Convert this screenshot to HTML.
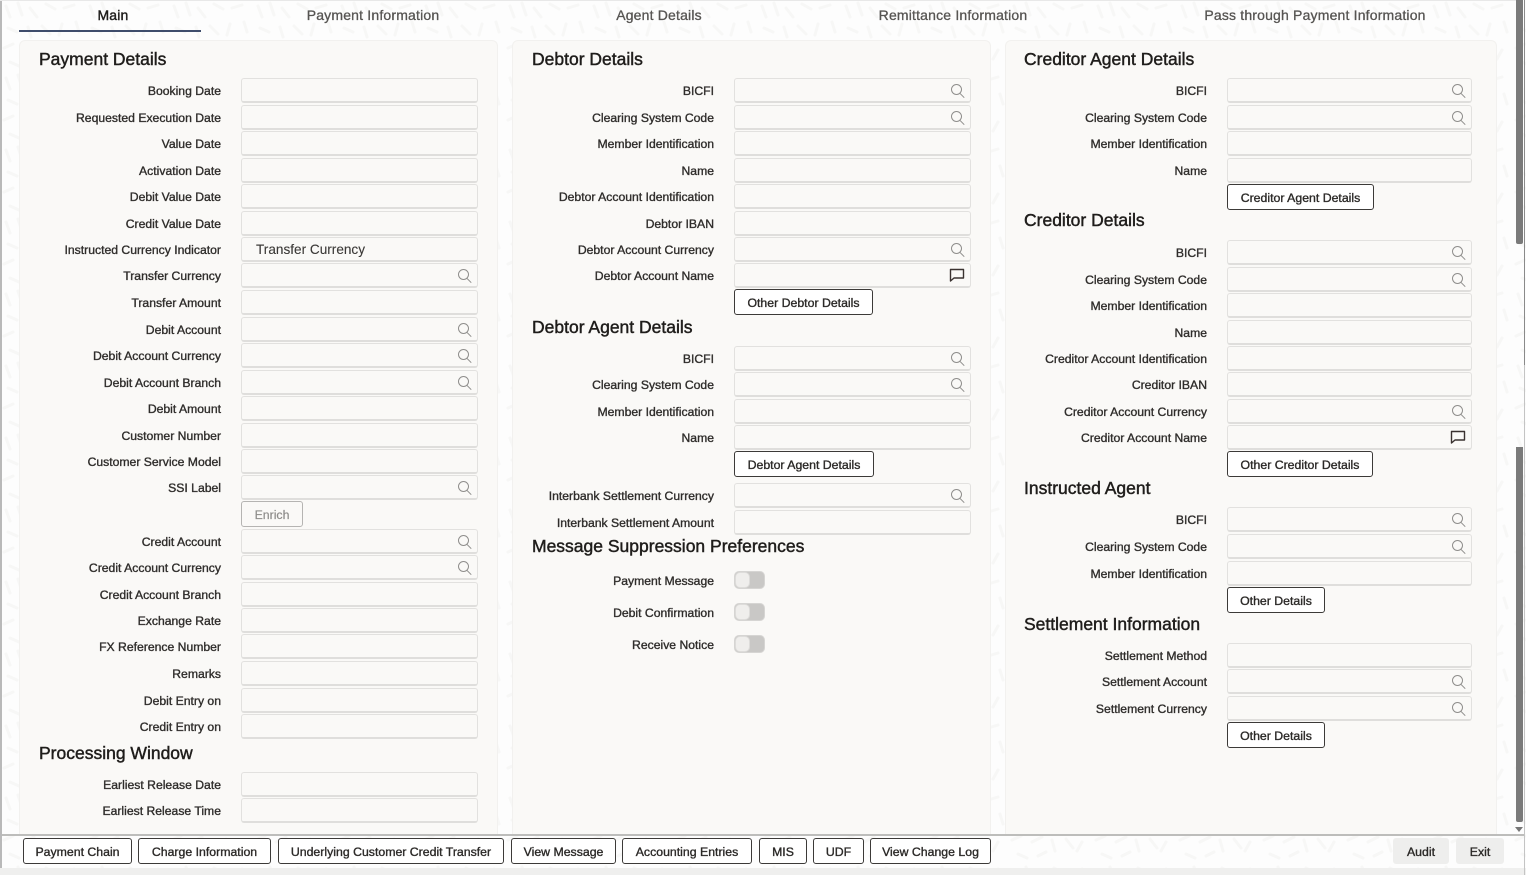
<!DOCTYPE html>
<html lang="en"><head><meta charset="utf-8"><title>Payment</title>
<style>
html,body{margin:0;padding:0;width:1526px;height:875px;overflow:hidden;background:#fdfdfd;font-family:"Liberation Sans",sans-serif;color:#2d2b29}
#bg{position:absolute;left:0;top:0}
.p{position:absolute;top:40px;height:794px;background:#faf9f7;border:1px solid #f2f1ef;border-bottom:0;border-radius:6px 6px 0 0;box-sizing:border-box}
.t{position:absolute;top:6px;height:18px;line-height:18px;font-size:14px;letter-spacing:.18px;color:#565452;transform:translateX(-50%);white-space:nowrap;-webkit-text-stroke:.3px #565452}
#u{position:absolute;left:19px;top:30px;width:182px;height:2px;background:#3f4d6c}
.c{position:absolute;top:0;width:500px;height:835px}
.h{position:absolute;left:39px;height:24px;line-height:24px;font-size:17.5px;color:#1f1d1b;white-space:nowrap;-webkit-text-stroke:.45px #1f1d1b}
.r{position:absolute;left:0;height:24px;width:480px;font-size:12.2px;line-height:26px}
.r span{position:absolute;right:259px;white-space:nowrap;color:#2f2d2b;-webkit-text-stroke:.35px #2f2d2b}
.r b{position:absolute;left:241px;top:0;width:237px;height:25px;box-sizing:border-box;background:#faf9f7;border:1px solid #e2e1df;border-bottom:2px solid #dfdedc;border-radius:3px;font-weight:400;font-size:13.6px;line-height:23px;padding-left:14px;color:#3a3836;-webkit-text-stroke:.1px #3a3836}
.w b{width:245px}
.s b::before{content:"";position:absolute;right:8px;top:5px;width:9px;height:9px;border:1.3px solid #8f8e8c;border-radius:50%}
.s b::after{content:"";position:absolute;right:5px;top:16px;width:6px;height:1.4px;background:#8f8e8c;transform:rotate(45deg)}
.m svg{position:absolute;right:5px;top:4px}
.o{position:absolute;height:26px;box-sizing:border-box;background:#fff;border:1px solid #3c3a38;border-radius:3px;font-size:12.3px;line-height:26px;text-align:center;white-space:nowrap;color:#2b2927;-webkit-text-stroke:.35px #2b2927}
.g{position:absolute;left:734px;width:31px;height:18px;box-sizing:border-box;background:#c9c8c6;border:1px solid #d6d5d3;border-radius:5px}
.g::after{content:"";position:absolute;left:0;top:0;width:15px;height:16px;background:#efeeec;border:1px solid #dddcda;border-radius:5px;box-sizing:border-box}
#sb1,#sb2{position:absolute;left:1516px;width:7px;background:#7a7a7a;border-radius:0 0 2px 2px}
</style></head>
<body>
<svg id="bg" width="1526" height="875" xmlns="http://www.w3.org/2000/svg"><defs><pattern id="d" width="84" height="72" patternUnits="userSpaceOnUse"><g stroke="#f7f7f6" stroke-width="3" stroke-linecap="round" fill="none"><path d="M6 6l4 11M18 3l4 12M30 8l7 9M46 4l9 5M64 8l10-3M8 28l9 4M28 27l3 10M42 26l8 8M62 24l-3 11M76 22l3 10M4 48l9-4M24 50l10-5M44 48l3 11M58 47l7 9M74 50l-5 9M10 62l9 4M30 64l8-4"/></g></pattern></defs><rect width="1526" height="875" fill="url(#d)"/></svg>

<div style="position:absolute;left:0;top:0;width:2px;height:875px;background:#b9b9b9"></div>
<div style="position:absolute;left:0;top:0;width:1516px;height:1px;background:#e8e8e8"></div>

<div class="t" style="left:113px;color:#1f1d1b;-webkit-text-stroke:.4px #1f1d1b">Main</div>
<div class="t" style="left:373px">Payment Information</div>
<div class="t" style="left:659px">Agent Details</div>
<div class="t" style="left:953px">Remittance Information</div>
<div class="t" style="left:1315px">Pass through Payment Information</div>
<div id="u"></div>

<div class="p" style="left:19px;width:479px"></div>
<div class="p" style="left:512px;width:479px"></div>
<div class="p" style="left:1005px;width:492px"></div>

<div class="c" style="left:0">
<div class="h" style="top:47px">Payment Details</div>
<div class="r" style="top:78px"><span>Booking Date</span><b></b></div>
<div class="r" style="top:105px"><span>Requested Execution Date</span><b></b></div>
<div class="r" style="top:131px"><span>Value Date</span><b></b></div>
<div class="r" style="top:158px"><span>Activation Date</span><b></b></div>
<div class="r" style="top:184px"><span>Debit Value Date</span><b></b></div>
<div class="r" style="top:211px"><span>Credit Value Date</span><b></b></div>
<div class="r" style="top:237px"><span>Instructed Currency Indicator</span><b>Transfer Currency</b></div>
<div class="r s" style="top:263px"><span>Transfer Currency</span><b></b></div>
<div class="r" style="top:290px"><span>Transfer Amount</span><b></b></div>
<div class="r s" style="top:317px"><span>Debit Account</span><b></b></div>
<div class="r s" style="top:343px"><span>Debit Account Currency</span><b></b></div>
<div class="r s" style="top:370px"><span>Debit Account Branch</span><b></b></div>
<div class="r" style="top:396px"><span>Debit Amount</span><b></b></div>
<div class="r" style="top:423px"><span>Customer Number</span><b></b></div>
<div class="r" style="top:449px"><span>Customer Service Model</span><b></b></div>
<div class="r s" style="top:475px"><span>SSI Label</span><b></b></div>
<div class="o" style="left:241px;top:501px;width:62px;border-color:#b5b4b2;background:#faf9f7;color:#8d8c8a;-webkit-text-stroke:.2px #8d8c8a">Enrich</div>
<div class="r s" style="top:529px"><span>Credit Account</span><b></b></div>
<div class="r s" style="top:555px"><span>Credit Account Currency</span><b></b></div>
<div class="r" style="top:582px"><span>Credit Account Branch</span><b></b></div>
<div class="r" style="top:608px"><span>Exchange Rate</span><b></b></div>
<div class="r" style="top:634px"><span>FX Reference Number</span><b></b></div>
<div class="r" style="top:661px"><span>Remarks</span><b></b></div>
<div class="r" style="top:688px"><span>Debit Entry on</span><b></b></div>
<div class="r" style="top:714px"><span>Credit Entry on</span><b></b></div>
<div class="h" style="top:741px">Processing Window</div>
<div class="r" style="top:772px"><span>Earliest Release Date</span><b></b></div>
<div class="r" style="top:798px"><span>Earliest Release Time</span><b></b></div>
</div>

<div class="c" style="left:493px">
<div class="h" style="top:47px">Debtor Details</div>
<div class="r s" style="top:78px"><span>BICFI</span><b></b></div>
<div class="r s" style="top:105px"><span>Clearing System Code</span><b></b></div>
<div class="r" style="top:131px"><span>Member Identification</span><b></b></div>
<div class="r" style="top:158px"><span>Name</span><b></b></div>
<div class="r" style="top:184px"><span>Debtor Account Identification</span><b></b></div>
<div class="r" style="top:211px"><span>Debtor IBAN</span><b></b></div>
<div class="r s" style="top:237px"><span>Debtor Account Currency</span><b></b></div>
<div class="r m" style="top:263px"><span>Debtor Account Name</span><b><svg width="16" height="14" viewBox="0 0 16 14"><path d="M1.5 1.5h13v8.5H5L1.5 13z" fill="none" stroke="#3a3230" stroke-width="1.4" stroke-linejoin="round"/></svg></b></div>
<div class="o" style="left:241px;top:289px;width:139px">Other Debtor Details</div>
<div class="h" style="top:315px">Debtor Agent Details</div>
<div class="r s" style="top:346px"><span>BICFI</span><b></b></div>
<div class="r s" style="top:372px"><span>Clearing System Code</span><b></b></div>
<div class="r" style="top:399px"><span>Member Identification</span><b></b></div>
<div class="r" style="top:425px"><span>Name</span><b></b></div>
<div class="o" style="left:241px;top:451px;width:140px">Debtor Agent Details</div>
<div class="r s" style="top:483px"><span>Interbank Settlement Currency</span><b></b></div>
<div class="r" style="top:510px"><span>Interbank Settlement Amount</span><b></b></div>
<div class="h" style="top:534px">Message Suppression Preferences</div>
<div class="r" style="top:568px"><span>Payment Message</span></div>
<div class="r" style="top:600px"><span>Debit Confirmation</span></div>
<div class="r" style="top:632px"><span>Receive Notice</span></div>
</div>
<div class="g" style="top:571px"></div>
<div class="g" style="top:603px"></div>
<div class="g" style="top:635px"></div>

<div class="c w" style="left:986px">
<div class="h" style="top:47px;left:38px">Creditor Agent Details</div>
<div class="r s" style="top:78px"><span>BICFI</span><b></b></div>
<div class="r s" style="top:105px"><span>Clearing System Code</span><b></b></div>
<div class="r" style="top:131px"><span>Member Identification</span><b></b></div>
<div class="r" style="top:158px"><span>Name</span><b></b></div>
<div class="o" style="left:241px;top:184px;width:147px">Creditor Agent Details</div>
<div class="h" style="top:208px;left:38px">Creditor Details</div>
<div class="r s" style="top:240px"><span>BICFI</span><b></b></div>
<div class="r s" style="top:267px"><span>Clearing System Code</span><b></b></div>
<div class="r" style="top:293px"><span>Member Identification</span><b></b></div>
<div class="r" style="top:320px"><span>Name</span><b></b></div>
<div class="r" style="top:346px"><span>Creditor Account Identification</span><b></b></div>
<div class="r" style="top:372px"><span>Creditor IBAN</span><b></b></div>
<div class="r s" style="top:399px"><span>Creditor Account Currency</span><b></b></div>
<div class="r m" style="top:425px"><span>Creditor Account Name</span><b><svg width="16" height="14" viewBox="0 0 16 14"><path d="M1.5 1.5h13v8.5H5L1.5 13z" fill="none" stroke="#3a3230" stroke-width="1.4" stroke-linejoin="round"/></svg></b></div>
<div class="o" style="left:241px;top:451px;width:146px">Other Creditor Details</div>
<div class="h" style="top:476px;left:38px">Instructed Agent</div>
<div class="r s" style="top:507px"><span>BICFI</span><b></b></div>
<div class="r s" style="top:534px"><span>Clearing System Code</span><b></b></div>
<div class="r" style="top:561px"><span>Member Identification</span><b></b></div>
<div class="o" style="left:241px;top:587px;width:98px">Other Details</div>
<div class="h" style="top:612px;left:38px">Settlement Information</div>
<div class="r" style="top:643px"><span>Settlement Method</span><b></b></div>
<div class="r s" style="top:669px"><span>Settlement Account</span><b></b></div>
<div class="r s" style="top:696px"><span>Settlement Currency</span><b></b></div>
<div class="o" style="left:241px;top:722px;width:98px">Other Details</div>
</div>

<div style="position:absolute;left:2px;top:834px;width:1522px;height:2px;background:#bdbdbb"></div>
<div class="o" style="left:23px;top:838px;width:109px">Payment Chain</div>
<div class="o" style="left:138px;top:838px;width:133px">Charge Information</div>
<div class="o" style="left:278px;top:838px;width:226px">Underlying Customer Credit Transfer</div>
<div class="o" style="left:511px;top:838px;width:105px">View Message</div>
<div class="o" style="left:622px;top:838px;width:130px">Accounting Entries</div>
<div class="o" style="left:759px;top:838px;width:48px">MIS</div>
<div class="o" style="left:813px;top:838px;width:51px">UDF</div>
<div class="o" style="left:870px;top:838px;width:121px">View Change Log</div>
<div class="o" style="left:1393px;top:838px;width:56px;background:#eeeeed;border-color:#eeeeed">Audit</div>
<div class="o" style="left:1456px;top:838px;width:48px;background:#eeeeed;border-color:#eeeeed">Exit</div>
<div style="position:absolute;left:0;top:868px;width:1526px;height:7px;background:#efefee"></div>

<div id="sb1" style="top:0;height:244px"></div>
<div id="sb2" style="top:447px;height:375px"></div>
<div style="position:absolute;left:1515px;top:827px;width:0;height:0;border-left:4px solid transparent;border-right:4px solid transparent;border-top:5px solid #777"></div>
<div style="position:absolute;left:1524px;top:0;width:1px;height:365px;background:#8a8a8a"></div>
<div style="position:absolute;left:1524px;top:365px;width:1px;height:510px;background:#c4c4c4"></div>
</body></html>
